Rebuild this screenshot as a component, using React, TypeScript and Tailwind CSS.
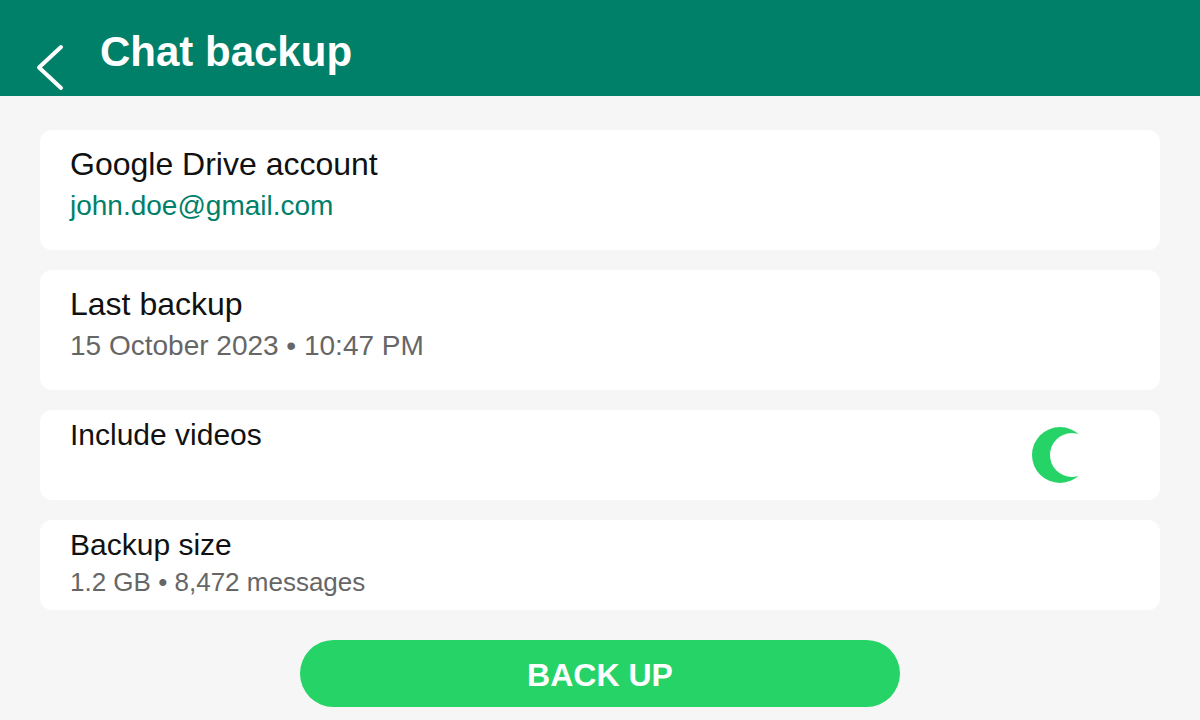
import React, { useState } from 'react'

const font = { fontFamily: '"Liberation Sans", Arial, sans-serif' }

interface RowProps {
  title: string;
  subtitle?: string;
  accent?: boolean;
}

const InfoCard: React.FC<RowProps> = ({ title, subtitle, accent }: RowProps) => {
  return (
    <div className='h-[120px] rounded-xl bg-white pl-[30px] pt-[16px]'>
      <p className='text-[32px] leading-[36px] text-[#111111]'>{title}</p>
      <p className={'mt-[6px] text-[28px] leading-[36px] ' + (accent ? 'text-[#008069]' : 'text-[#666666]')}>
        {subtitle}
      </p>
    </div>
  )
}

const Toggle: React.FC<{ on: boolean; onClick: () => void }> = ({ on, onClick }) => {
  return (
    <button type='button' onClick={onClick} aria-pressed={on} className='mr-[72px] block h-[56px] w-[56px] self-center'>
      <svg className='block' width='56' height='56' viewBox='0 0 56 56'>
        <circle cx='28' cy='28' r='28' fill={on ? '#25d366' : '#bdbdbd'} />
        <circle cx='40' cy='28' r='22' fill='#ffffff' />
      </svg>
    </button>
  )
}

export default function App() {
  const [videos, setVideos] = useState<boolean>(true)

  return (
    <div style={font} className='min-h-[720px] w-full bg-[#f6f6f6]'>
      <header className='flex h-[96px] items-start bg-[#008069]'>
        <svg className='ml-[35px] mt-[43px]' width='30' height='48' viewBox='0 0 30 48' fill='none'>
          <path d='M26 4 L4 24.5 L26 45' stroke='#ffffff' strokeWidth='4' strokeLinecap='round' strokeLinejoin='round' />
        </svg>
        <h1 className='ml-[35px] mt-[28px] text-[42px] font-bold leading-[48px] text-white'>Chat backup</h1>
      </header>

      <main className='flex flex-col gap-[20px] px-[40px] pt-[34px]'>
        <InfoCard title='Google Drive account' subtitle='john.doe@gmail.com' accent />
        <InfoCard title='Last backup' subtitle='15 October 2023 • 10:47 PM' />

        <div className='flex h-[90px] items-start justify-between rounded-xl bg-white pl-[30px]'>
          <p className='pt-[7px] text-[30px] leading-[36px] text-[#111111]'>Include videos</p>
          <Toggle on={videos} onClick={() => setVideos(!videos)} />
        </div>

        <div className='h-[90px] rounded-xl bg-white pl-[30px] pt-[7px]'>
          <p className='text-[30px] leading-[36px] text-[#111111]'>Backup size</p>
          <p className='mt-[1px] text-[26px] leading-[36px] text-[#666666]'>1.2 GB • 8,472 messages</p>
        </div>
      </main>

      <div className='flex justify-center pt-[30px]'>
        <button type='button'
                className='h-[67px] w-[600px] rounded-full bg-[#25d366] pt-[2px] text-[32px] font-bold text-white'>
          BACK UP
        </button>
      </div>
    </div>
  )
}
